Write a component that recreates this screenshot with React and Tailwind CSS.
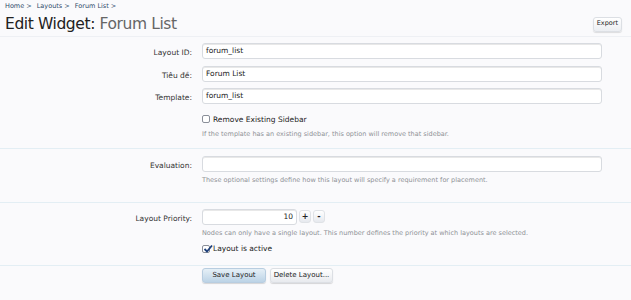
import React from "react";

const font = { fontFamily: '"DejaVu Sans", Verdana, sans-serif' };

function Row({ label, children, className = "" }) {
  return (
    <div className={"flex items-start " + className}>
      <div className="w-[192px] shrink-0 text-right text-[7.5px] text-[#333] pt-[4px]">{label}</div>
      <div className="ml-[10px] w-[400px]">{children}</div>
    </div>
  );
}

function Input({ value = "", className = "" }) {
  return (
    <div className={"h-[16px] bg-white border border-[#d8dbe0] rounded-[3px] text-[7.5px] text-[#222] px-[3px] flex items-center shadow-[inset_0_1px_0_#e8e8e8] " + className}>
      {value}
    </div>
  );
}

function Hint({ children, className = "mt-[5px]" }) {
  return <div className={"text-[6.5px] text-[#8e9196] " + className}>{children}</div>;
}

function Check({ checked, label }) {
  return (
    <div className="flex items-center gap-[3px] text-[7.5px] text-[#222]">
      <div className="w-[8px] h-[8px] border border-[#8a8f99] rounded-[2px] bg-white flex items-center justify-center relative">
        {checked && (
          <svg width="10" height="10" viewBox="0 0 10 10" className="absolute -top-[2px] left-0">
            <path d="M1.5 5 L4 7.5 L9 1.5" stroke="#1d3f7a" strokeWidth="1.8" fill="none" />
          </svg>
        )}
      </div>
      <span>{label}</span>
    </div>
  );
}

export default function App() {
  return (
    <div className="w-[631px] h-[300px] bg-[#fafafc] overflow-hidden" style={font}>
      <div className="px-[5px] pt-[2px]">
        <div className="text-[6.5px] text-[#2f4a6a] flex gap-[5px]">
          <span>Home &gt;</span>
          <span>Layouts &gt;</span>
          <span>Forum List &gt;</span>
        </div>
        <div className="flex items-center justify-between mt-[3px]">
          <div className="text-[15.5px] leading-[19px] text-[#222] tracking-[-0.4px]">
            Edit Widget: <span className="text-[#666]">Forum List</span>
          </div>
          <div className="mr-[4px] h-[15px] px-[3px] text-[6.5px] text-[#222] bg-gradient-to-b from-white to-[#eceef2] border border-[#dcdfe4] rounded-[3px] flex items-center shadow-[0_1px_1px_rgba(0,0,0,0.12)]">
            Export
          </div>
        </div>
      </div>
      <div className="mt-[2px] h-[1px] bg-[#eef0f4]"></div>

      <div className="pt-[6px]">
        <Row label="Layout ID:"><Input value="forum_list" /></Row>
        <Row label="Tiêu đề:" className="mt-[7px]"><Input value="Forum List" /></Row>
        <Row label="Template:" className="mt-[6px]"><Input value="forum_list" /></Row>
        <Row label="" className="mt-[10px]">
          <Check label="Remove Existing Sidebar" />
          <Hint>If the template has an existing sidebar, this option will remove that sidebar.</Hint>
        </Row>
      </div>
      <div className="mt-[8px] h-[1px] bg-[#e3eef4]"></div>

      <div className="pt-[7px]">
        <Row label="Evaluation:"><Input /></Row>
        <Row label="">
          <Hint className="mt-[4px]">These optional settings define how this layout will specify a requirement for placement.</Hint>
        </Row>
      </div>
      <div className="mt-[16px] h-[1px] bg-[#e3eef4]"></div>

      <div className="pt-[6px]">
        <Row label="Layout Priority:">
          <div className="flex items-center gap-[2px]">
            <Input value="10" className="w-[95px] justify-end" />
            <div className="w-[12px] h-[13px] text-[8px] font-bold text-[#222] bg-gradient-to-b from-white to-[#e6e9ee] border border-[#dfe2e6] rounded-[3px] flex items-center justify-center">+</div>
            <div className="w-[12px] h-[13px] text-[8px] font-bold text-[#222] bg-gradient-to-b from-white to-[#e6e9ee] border border-[#dfe2e6] rounded-[3px] flex items-center justify-center">-</div>
          </div>
          <Hint className="mt-[4px]">Nodes can only have a single layout. This number defines the priority at which layouts are selected.</Hint>
          <div className="mt-[5px]"><Check checked label="Layout is active" /></div>
        </Row>
      </div>
      <div className="mt-[10px] h-[1px] bg-[#e3eef4]"></div>

      <div className="pt-[2px] pl-[202px] flex gap-[4px]">
        <div className="w-[64px] h-[15px] text-[7px] text-[#222] bg-gradient-to-b from-[#e6f0f7] to-[#bcd3e6] border border-[#b8cde0] rounded-[3px] flex items-center justify-center shadow-[0_1px_1px_rgba(0,0,0,0.15)]">Save Layout</div>
        <div className="w-[63px] h-[15px] text-[7px] text-[#222] bg-gradient-to-b from-white to-[#e8eaee] border border-[#dcdfe4] rounded-[3px] flex items-center justify-center shadow-[0_1px_1px_rgba(0,0,0,0.15)]">Delete Layout...</div>
      </div>
    </div>
  );
}
